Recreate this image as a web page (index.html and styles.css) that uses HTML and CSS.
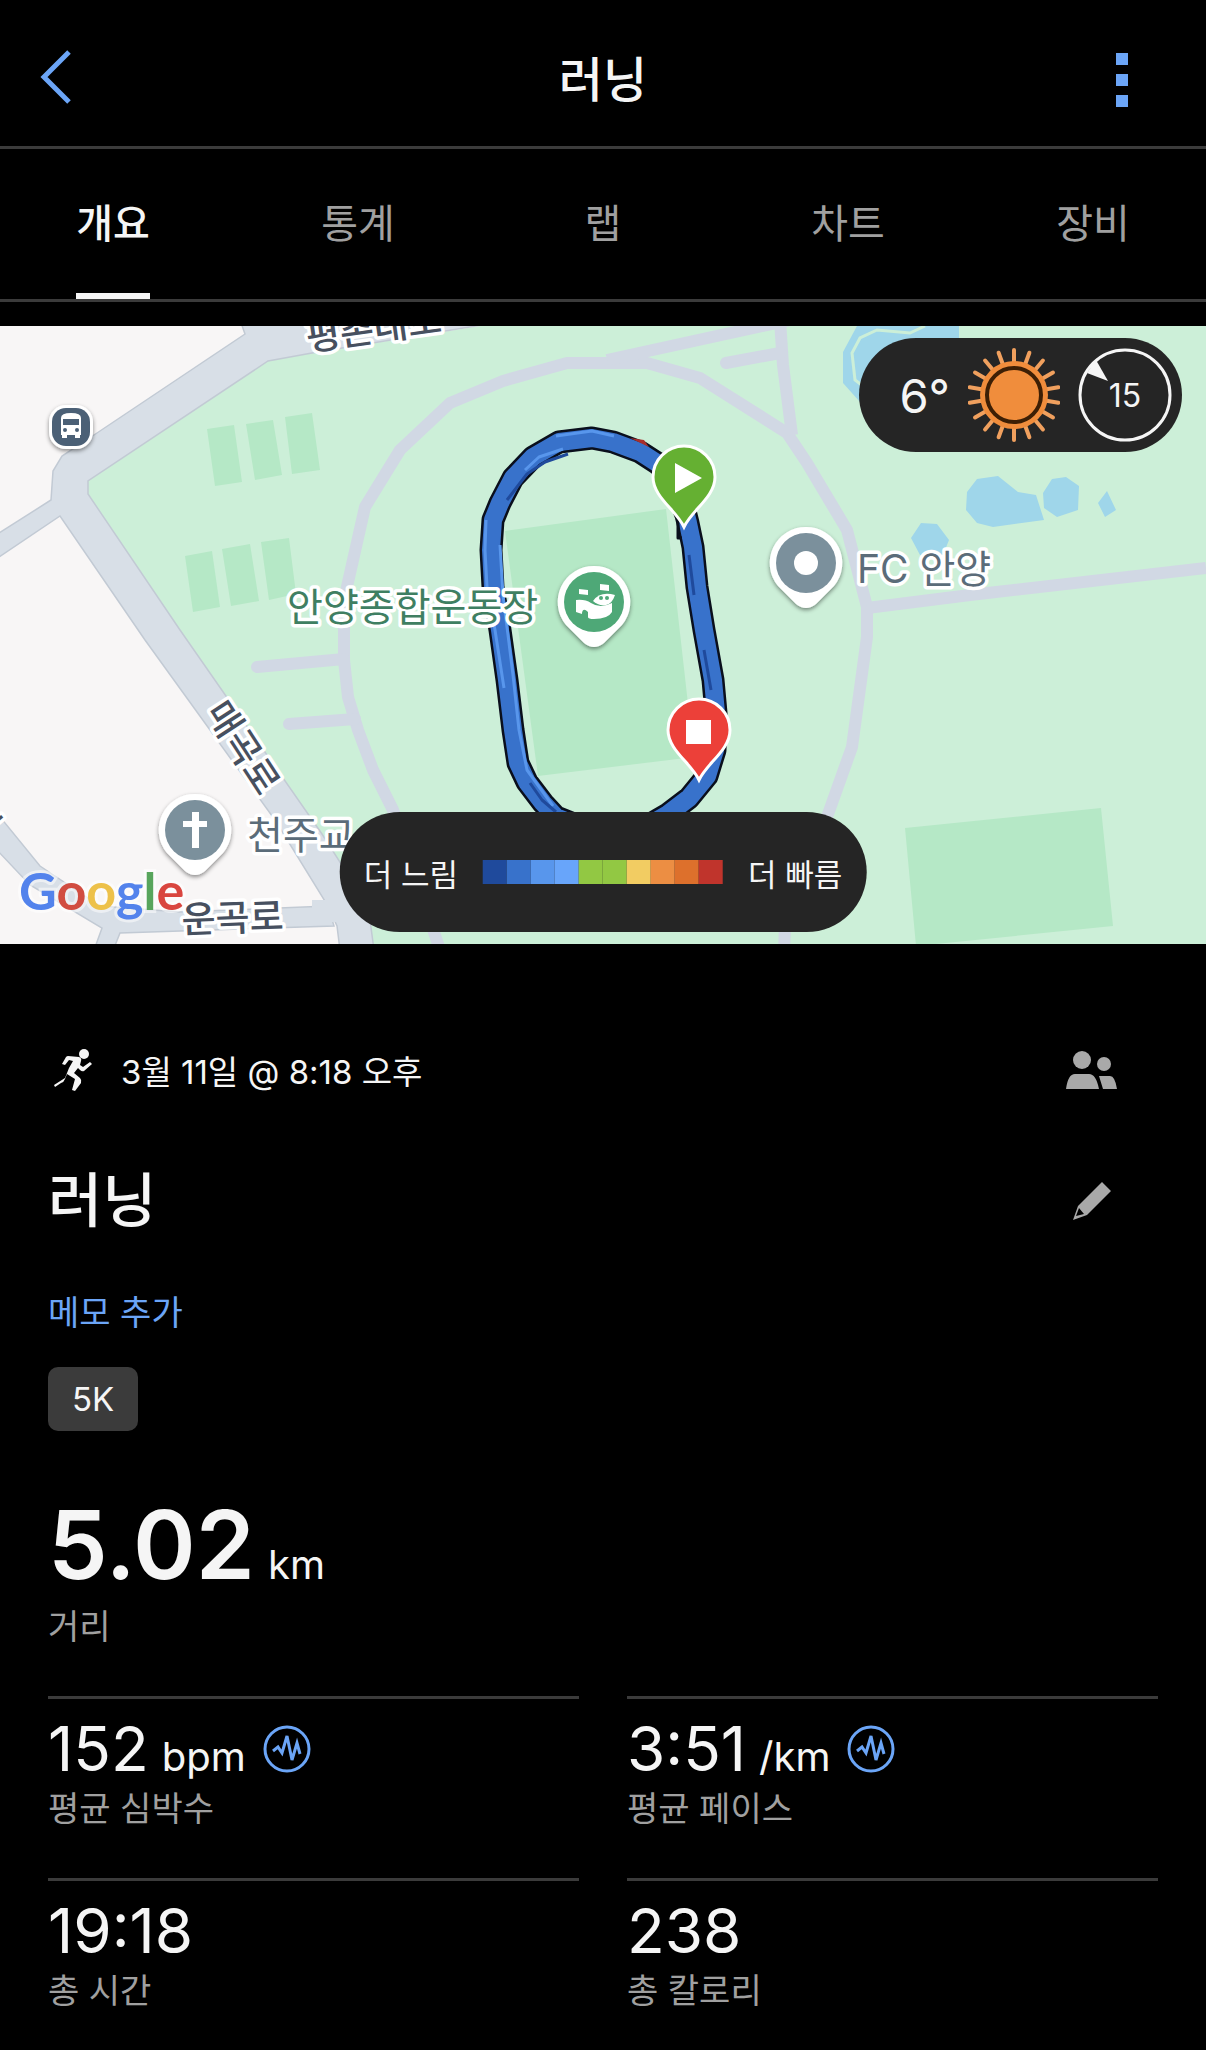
FILE: index.html
```html
<!DOCTYPE html>
<html lang="ko">
<head>
    <meta charset="UTF-8">
    <meta name="viewport" content="width=device-width, initial-scale=1.0">
    <title>러닝</title>
    <link rel="stylesheet" href="styles.css">
</head>
<body>

<header class="top-bar">
    <button class="icon-button" aria-label="뒤로">
        <svg width="32" height="60" viewBox="0 0 32 60"><path d="M29 2 4 27l25 25" fill="none" stroke="#6ba5f7" stroke-width="5"/></svg>
    </button>
    <h1>러닝</h1>
    <button class="icon-button" aria-label="더 보기">
        <svg width="12" height="54" viewBox="0 0 12 54" fill="#6ba5f7"><path d="M0 0h12v12H0zM0 21h12v12H0zM0 42h12v12H0z"/></svg>
    </button>
</header>

<nav class="tabs">
    <a href="#overview" class="active">개요</a>
    <a href="#stats">통계</a>
    <a href="#laps">랩</a>
    <a href="#charts">차트</a>
    <a href="#gear">장비</a>
</nav>

<main id="overview">
    <div class="map">
        <svg class="map-canvas" viewBox="0 326 1206 618">
            <defs>
                <filter id="shadow" x="-30%" y="-30%" width="160%" height="160%">
                    <feDropShadow dx="0" dy="2" stdDeviation="2" flood-color="#000" flood-opacity="0.45"/>
                </filter>
                <g id="poi">
                    <path d="M0-36a36 36 0 0 1 28 59L10 41q-10 8-20 0L-28 23A36 36 0 0 1 0-36z" fill="#fff" filter="url(#shadow)"/>
                    <circle r="30"/>
                </g>
            </defs>

            <!-- ground -->
            <rect y="326" width="1206" height="618" fill="#f8f6f6"/>
            <path d="M480 326 312 353l-44 8L88 481v13l92 136 142 204 32 60 18 50h834V326z" fill="#ccefd8"/>

            <!-- streets -->
            <g fill="#d8dfe7" stroke="#c2cad4" stroke-width="1.5">
                <path d="M240 320l5 14L97 433l-35 23-9 15-2 29-55 35v24l64-43 85 124 130 180 53 86 9 20 3 24h34l-4-30-16-36-32-50L180 630 88 494v-13l180-120 44-8 200-33z"/>
                <path d="M-4 812 40 866l60 40 80 6 148-6 6 20-214 7-8 20H93l9-25-72-43-34-36z"/>
            </g>
            <path d="M312 900h24v22h-24z" fill="#d8dfe7"/>

            <!-- pitches -->
            <g fill="#b5e8c6">
                <path d="M207 429l27-4 8 57-27 4zM246 424l27-4 9 55-27 5zM285 417l27-4 8 57-28 4z"/>
                <path d="M185 556l27-5 8 56-27 5zM222 549l28-5 9 57-28 5zM261 542l28-4 7 56-27 6z"/>
                <path d="M505 531l161-22 28 248-156 19zM905 828l196-20 12 118-197 20z"/>
            </g>

            <!-- water -->
            <g fill="#9fd6ea">
                <path d="M977 479l21-3 20 16 18 3 8 25-51 7-16-4-11-13 1-18z"/>
                <path d="M1052 479l14-2 13 9-1 24-21 7-13-9-1-15zM1107 491l9 19-11 7-7-14zM921 523l16 1 12 16-6 15h-23l-9-17z"/>
                <path d="M857 326h102v60l-99 16-17-19v-31z"/>
            </g>
            <path d="M925 326l-15 7-33-3-17 8-8 15 3 27 8 6" fill="none" stroke="#ccefd8" stroke-width="3"/>

            <!-- footpaths -->
            <g fill="none" stroke="#d1d8e4" stroke-width="12" stroke-linejoin="round">
                <path d="M440 950 393 810l-20-40-15-40-10-33-4-37V600l21-93 35-57 50-47 53-22 64-18h80l53 15 87 55 20 30 40 67 20 77v30l-15 110-25 70-12 23-30 86-2 54"/>
                <path d="M607 360 790 320M780 320l3 45 9 70M867 608l103-13 236-27"/>
                <path d="M726 363l54-10M257 667l87-8M289 724l66-5" stroke-linecap="round"/>
            </g>

            <!-- recorded track -->
            <g fill="none" stroke-linejoin="round">
                <path d="M688 523l5 24 4 40 7 43 9 50 3 33-1 37-8 26-18 22-21 16-24 14-24 7-34-6-30-12-13-14-16-21-9-19-5-33-6-50-7-50-7-43-2-37 2-30 7-17 13-25 20-21 26-15 33-4 21 4 27 10 17 11 14 12 15 40z" stroke="#0a0f1c" stroke-width="23"/>
                <path d="M688 523l5 24 4 40 7 43 9 50 3 33-1 37-8 26-18 22-21 16-24 14-24 7-34-6-30-12-13-14-16-21-9-19-5-33-6-50-7-50-7-43-2-37 2-30 7-17 13-25 20-21 26-15 33-4 21 4 27 10 17 11 14 12 15 40z" stroke="#3872cb" stroke-width="18"/>
                <path d="M556 436l36-5 22 5M486 520l-1 30 2 37 8 43 9 58M500 545l3 50 10 80 6 55 8 40 26 36M525 470l14-13 24-8" stroke="#5896ec" stroke-width="3"/>
                <path d="M507 500l20-26 18-12 23-8M689 555l5 40M704 650l7 40M530 783l12 17 14 12" stroke="#1f4a9c" stroke-width="3"/>
                <path d="M630 438l14 2 5 7z" fill="#a82f2c"/>
                <path d="M678 518v20h4" stroke="#0a0f1c" stroke-width="3"/>
            </g>

            <!-- place names -->
            <g class="map-label">
                <text class="place stadium" x="287" y="621">안양종합운동장</text>
                <text class="place" x="857" y="583">FC 안양</text>
                <text class="place" x="247" y="849">천주교</text>
                <text class="street" x="182" y="933" transform="rotate(-2 182 933)">운곡로</text>
                <text class="street" x="204" y="712" transform="rotate(57 204 712)">매곡로</text>
                <text class="street" x="308" y="351" transform="rotate(-8 308 351)">평촌대로</text>
                <text class="street" x="-21" y="839" transform="rotate(-40 -21 839)">로</text>
            </g>

            <!-- bus stop -->
            <g transform="translate(71 427)">
                <rect x="-22" y="-22" width="44" height="44" rx="17" fill="#fff" filter="url(#shadow)"/>
                <rect x="-19" y="-19" width="38" height="38" rx="14" fill="#4b6076"/>
                <path d="M-10-9q0-5 10-5t10 5v17h-1v3h-5V8h-8v3h-5V8h-1z" fill="#fff"/>
                <path d="M-8-8H8v6H-8z" fill="#4b6076"/>
                <circle cx="-6" cy="3" r="2" fill="#4b6076"/>
                <circle cx="6" cy="3" r="2" fill="#4b6076"/>
            </g>

            <!-- stadium, football club, church -->
            <g transform="translate(594 602)" fill="#4ea877">
                <use href="#poi"/>
                <path d="M-15-13l9 1v5l-9-1zM6-18l9 1v6l-9-1z" fill="#fff"/>
                <path d="M-18-2q9-1 15 3 9 6 21 0v9q-4 7-18 7-6 0-6-2v-5q-5-5-6 1v1l-6-2z" fill="#fff"/>
                <path d="M-1-1q7-10 22-6-3 9-9 10-8 1-13-4z" fill="#fff"/>
                <circle cx="7" cy="-4" r="2"/><circle cx="13" cy="-4" r="2"/>
            </g>
            <g transform="translate(806 563)" fill="#7b909c">
                <use href="#poi"/>
                <circle r="12" fill="#fff"/>
            </g>
            <g transform="translate(195 830)" fill="#7b909c">
                <use href="#poi"/>
                <path d="M-3-18h7v9h8v6H4v21h-7V-3h-9v-6h9z" fill="#fff"/>
            </g>

            <!-- start and finish -->
            <g stroke="#fff" stroke-width="3">
                <path d="M684 527c-8-17-31-30-31-50a31 31 0 0 1 62 0c0 20-23 33-31 50z" fill="#65b032"/>
                <path d="M699 780c-8-17-31-30-31-50a31 31 0 0 1 62 0c0 20-23 33-31 50z" fill="#ec4039"/>
            </g>
            <path d="M675 463l27 15-27 15zM686 720h25v24h-25z" fill="#fff"/>

            <text class="google" x="19" y="910"><tspan fill="#5383ec">G</tspan><tspan fill="#d14d41">o</tspan><tspan fill="#edc14a">o</tspan><tspan fill="#5383ec">g</tspan><tspan fill="#58a55c">l</tspan><tspan fill="#d9463f">e</tspan></text>
        </svg>

        <div class="weather">
            <span class="temperature">6°</span>
            <svg width="92" height="94" viewBox="-46 -47 92 94" aria-label="맑음">
                <g stroke="#f0a05e" stroke-width="4" stroke-linecap="round">
                    <path id="ray" d="M0-33v-12"/>
                    <use href="#ray" transform="rotate(20)"/><use href="#ray" transform="rotate(40)"/>
                    <use href="#ray" transform="rotate(60)"/><use href="#ray" transform="rotate(80)"/>
                    <use href="#ray" transform="rotate(100)"/><use href="#ray" transform="rotate(120)"/>
                    <use href="#ray" transform="rotate(140)"/><use href="#ray" transform="rotate(160)"/>
                    <use href="#ray" transform="rotate(180)"/><use href="#ray" transform="rotate(200)"/>
                    <use href="#ray" transform="rotate(220)"/><use href="#ray" transform="rotate(240)"/>
                    <use href="#ray" transform="rotate(260)"/><use href="#ray" transform="rotate(280)"/>
                    <use href="#ray" transform="rotate(300)"/><use href="#ray" transform="rotate(320)"/>
                    <use href="#ray" transform="rotate(340)"/>
                </g>
                <circle r="34" fill="#f08d3c"/>
                <circle r="27" fill="#f08d3c" stroke="#3d1f05" stroke-width="4"/>
            </svg>
            <div class="wind">
                <svg width="94" height="94" viewBox="-47 -47 94 94">
                    <circle r="45" fill="none" stroke="#f5f5f5" stroke-width="3"/>
                    <path d="M-29-35-38-22-17-14z" fill="#f5f5f5"/>
                </svg>
                <span>15</span>
            </div>
        </div>

        <div class="legend">
            <span>더 느림</span>
            <div class="legend-scale">
                <i class="c1"></i><i class="c2"></i><i class="c3"></i><i class="c4"></i><i class="c5"></i>
                <i class="c5"></i><i class="c6"></i><i class="c7"></i><i class="c8"></i><i class="c9"></i>
            </div>
            <span>더 빠름</span>
        </div>
    </div>

    <section class="details">
        <div class="row">
            <svg width="40" height="42" viewBox="0 0 40 42" fill="#f5f5f5">
                <circle cx="31" cy="5" r="5"/>
                <path d="M15 7l11 1q3 1 2 4l-1 4 3 2 7-5 2 2-8 7q-2 1-4-1l-2-2-4 5 6 5q2 2 1 5l-6 8-3-1 3-11-8-5-2 5q-1 3-4 4L2 38l-1-2 11-7 4-10 4-7-4-1-4 5-3-1 4-7q1-1 2-1z"/>
            </svg>
            <span class="date">3월 11일 @ 8:18 오후</span>
            <button class="icon-button" aria-label="공유 대상">
                <svg width="52" height="38" viewBox="0 0 52 38" fill="#a9a9a9">
                    <circle cx="16" cy="9" r="9"/><circle cx="38" cy="13" r="7"/>
                    <path d="M0 38q2-15 9-15h14q7 0 10 15zM33 25h11q5 0 7 13H37z"/>
                </svg>
            </button>
        </div>
        <div class="row title-row">
            <h2>러닝</h2>
            <button class="icon-button" aria-label="이름 편집">
                <svg width="38" height="38" viewBox="0 0 38 38" fill="#a9a9a9">
                    <path fill-rule="evenodd" d="M29 0l9 9-24 24-14 5 5-14zM6 26l-3 8 8-2z"/>
                </svg>
            </button>
        </div>
        <a href="#memo" class="memo">메모 추가</a>
        <span class="badge">5K</span>

        <div class="distance">
            <p class="value">5.02 <small>km</small></p>
            <p class="label">거리</p>
        </div>

        <div class="stats">
            <div class="stat">
                <p class="value">152 <small>bpm</small>
                    <svg width="48" height="48" viewBox="0 0 48 48" fill="none" stroke="#6ba5f7" stroke-width="3"><circle cx="24" cy="24" r="22"/><path d="M10 26l5-4 4 6 5-17 5 24 5-17 3 11"/></svg>
                </p>
                <p class="label">평균 심박수</p>
            </div>
            <div class="stat">
                <p class="value">3:51 <small>/km</small>
                    <svg width="48" height="48" viewBox="0 0 48 48" fill="none" stroke="#6ba5f7" stroke-width="3"><circle cx="24" cy="24" r="22"/><path d="M10 26l5-4 4 6 5-17 5 24 5-17 3 11"/></svg>
                </p>
                <p class="label">평균 페이스</p>
            </div>
            <div class="stat">
                <p class="value">19:18</p>
                <p class="label">총 시간</p>
            </div>
            <div class="stat">
                <p class="value">238</p>
                <p class="label">총 칼로리</p>
            </div>
        </div>
    </section>
</main>

</body>
</html>
```

FILE: styles.css
```css
* {
    box-sizing: border-box;
}

body {
    margin: 0;
    background-color: #000;
    color: #f5f5f5;
    font-family: Inter, "Noto Sans CJK KR", sans-serif;
    font-size: 34px;
}

h1, h2, p {
    margin: 0;
}

h1, h2 {
    font-weight: 500;
}

svg {
    display: block;
    flex: none;
}

.icon-button {
    display: flex;
    align-items: center;
    justify-content: center;
    width: 76px;
    height: 76px;
    padding: 0;
    border: none;
    background: none;
    cursor: pointer;
}

.top-bar {
    display: grid;
    grid-template-columns: 1fr auto 1fr;
    align-items: center;
    padding: 42px 18px 28px;
    border-bottom: 3px solid #3b3b3b;
}

.top-bar h1 {
    font-size: 48px;
    line-height: 76px;
}

.top-bar .icon-button:last-child {
    justify-self: end;
    margin-right: 28px;
}

/* tabs */
.tabs {
    display: grid;
    grid-template-columns: repeat(5, 74px);
    justify-content: space-between;
    padding: 0 76px;
    border-bottom: 3px solid #3b3b3b;
}

.tabs a {
    padding-top: 6px;
    border-bottom: 6px solid transparent;
    color: #a0a0a0;
    font-size: 40px;
    line-height: 138px;
    text-align: center;
    text-decoration: none;
}

.tabs .active {
    border-color: #f5f5f5;
    color: #f5f5f5;
    font-weight: 500;
}

/* map */
.map {
    position: relative;
    margin-top: 24px;
}

.map-canvas {
    width: 100%;
    height: auto;
}

.map-label text {
    paint-order: stroke;
    stroke: #fff;
    stroke-width: 7px;
    stroke-linejoin: round;
}

.place {
    fill: #5b6c79;
    font-size: 39px;
}

.stadium {
    fill: #3f7f62;
}

.street {
    fill: #47505f;
    font-size: 37px;
    font-weight: 500;
}

.google {
    font-family: Lato, sans-serif;
    font-size: 52px;
    font-weight: 700;
    paint-order: stroke;
    stroke: rgba(255, 255, 255, 0.5);
    stroke-width: 6px;
}

.weather, .legend {
    position: absolute;
    display: flex;
    align-items: center;
    border-radius: 60px;
    background-color: #252525;
}

.weather {
    top: 12px;
    right: 24px;
    gap: 18px;
    height: 114px;
    padding: 0 10px 0 40px;
}

.temperature {
    font-size: 47px;
}

.wind {
    display: grid;
    place-items: center;
}

.wind > * {
    grid-area: 1 / 1;
}

.wind span {
    font-size: 32px;
}

.legend {
    bottom: 12px;
    left: 50%;
    gap: 25px;
    height: 120px;
    padding: 0 24px;
    transform: translateX(-50%);
    font-size: 31px;
    white-space: nowrap;
}

.legend-scale {
    display: flex;
}

.legend-scale i {
    width: 24px;
    height: 24px;
}

.c1 { background-color: #1f4a9c; }
.c2 { background-color: #3872cb; }
.c3 { background-color: #5896ec; }
.c4 { background-color: #68a5fa; }
.c5 { background-color: #92c843; }
.c6 { background-color: #f2cc62; }
.c7 { background-color: #ec8e43; }
.c8 { background-color: #dd702c; }
.c9 { background-color: #c0342c; }

/* activity details */
.details {
    padding: 88px 48px 24px;
}

.row {
    display: flex;
    align-items: center;
    gap: 28px;
    padding: 0 28px 0 5px;
}

.row .icon-button {
    margin-left: auto;
}

.date {
    font-size: 33px;
}

.title-row {
    margin-top: 55px;
    padding-left: 0;
}

.title-row h2 {
    font-size: 59px;
    line-height: 76px;
}

.memo {
    display: block;
    width: fit-content;
    margin-top: 50px;
    color: #6ba5f7;
    line-height: 48px;
    text-decoration: none;
}

.badge {
    display: block;
    width: fit-content;
    margin-top: 30px;
    padding: 0 24px;
    border-radius: 10px;
    background-color: #3b3b3b;
    font-size: 33px;
    line-height: 64px;
}

.distance {
    margin-top: 56px;
}

.value {
    display: flex;
    align-items: baseline;
    gap: 13px;
}

.value small {
    font-size: 40px;
    font-weight: 400;
    line-height: 48px;
}

.value svg {
    align-self: center;
    margin-left: 4px;
}

.label {
    color: #a0a0a0;
    line-height: 48px;
}

.distance .value {
    font-size: 95px;
    font-weight: 600;
    line-height: 116px;
}

.stats {
    display: grid;
    grid-template-columns: 1fr 1fr;
    column-gap: 48px;
    margin-top: 45px;
}

.stat {
    min-height: 182px;
    padding-top: 14px;
    border-top: 3px solid #3b3b3b;
}

.stat .value {
    font-size: 62px;
    line-height: 72px;
}

.stats .stat:nth-last-child(-n+2) {
    min-height: 0;
}
```
